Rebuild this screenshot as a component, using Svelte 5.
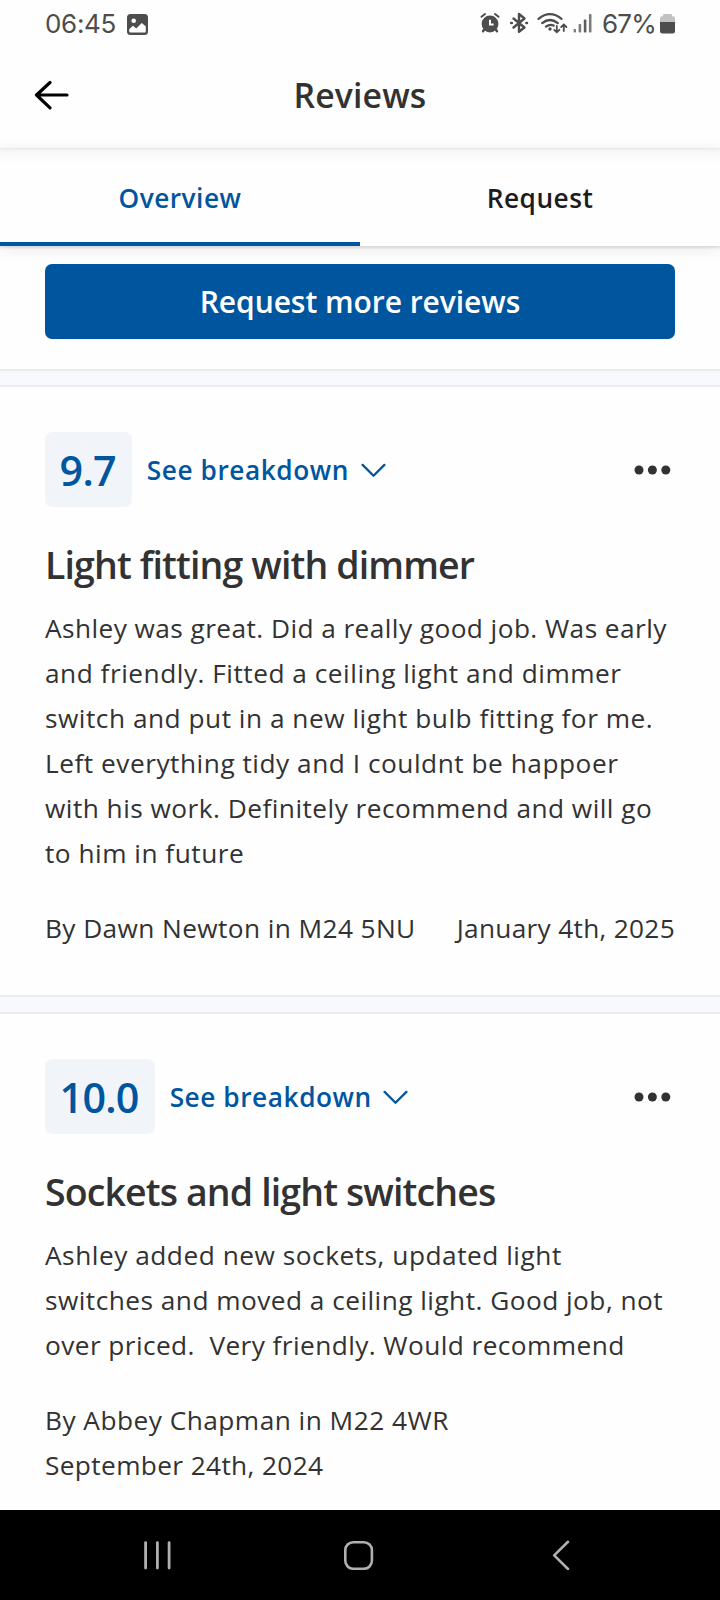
<script>
  const reviews = [
    {
      score: '9.7',
      title: 'Light fitting with dimmer',
      lines: [
        ['Ashley was great. Did a really good job. Was early', 0.43],
        ['and friendly. Fitted a ceiling light and dimmer', 0.51],
        ['switch and put in a new light bulb fitting for me.', 0.51],
        ['Left everything tidy and I couldnt be happoer', 0.52],
        ['with his work. Definitely recommend and will go', 0.47],
        ['to him in future', 0.5]
      ],
      by: ['By Dawn Newton in M24 5NU', 0.4],
      date: ['January 4th, 2025', 0.3]
    },
    {
      score: '10.0',
      title: 'Sockets and light switches',
      lines: [
        ['Ashley added new sockets, updated light', 0.52],
        ['switches and moved a ceiling light. Good job, not', 0.465],
        ['over priced.\u00a0 Very friendly. Would recommend', 0.42]
      ],
      by: ['By Abbey Chapman in M22 4WR', 0.48],
      date: ['September 24th, 2024', 0.37]
    }
  ];
</script>

<div class="screen">
  <div class="status">
    <span class="time">06:45</span>
    <svg class="photo" width="21" height="21" viewBox="0 0 21 21">
      <rect width="21" height="21" rx="3.5" fill="#4d4d4d" />
      <circle cx="6.7" cy="6.7" r="2.3" fill="#fff" />
      <path d="M2.2 15.2 6 11.8 9.2 14.4 14.8 9 18.8 12.6V17.5a1 1 0 0 1-1 1H3.2a1 1 0 0 1-1-1z" fill="#fff" />
    </svg>
    <span class="grow"></span>
    <svg class="icons" width="114" height="26" viewBox="0 0 114 26">
      <g fill="none" stroke="#4d4d4d" stroke-linecap="round">
        <circle cx="10" cy="13" r="8.4" fill="#4d4d4d" stroke="none" />
        <path d="M1.5 5.8 5 3M18.5 5.8 15 3" stroke-width="2" />
        <path d="M4.2 18.5 3 20.2M15.8 18.5 17 20.2" stroke-width="2.4" />
        <path d="M10 8.8V13.4H13.6" stroke="#fff" stroke-width="2" stroke-linecap="butt" />
        <path d="M33.5 7.5 44.5 16.5 39 20.8V3L44.5 7.5 33.5 16.5" stroke-width="2.4" stroke-linejoin="round" />
        <path d="M31.2 12H31.8M46.4 12H47" stroke-width="2.6" />
        <path d="M58.5 7.8Q70 -1.5 81.5 7.8M62.2 12.1Q70 5.8 77.8 12.1M66 15.6Q70 12.6 73.6 14.6" stroke-width="2.3" />
        <circle cx="70" cy="18" r="1.7" fill="#4d4d4d" stroke="none" />
        <path d="M76.8 15V21M74.2 18.8 76.8 21.3 79.4 18.8M83.8 20V14M81.2 16 83.8 13.4 86.4 16" stroke-width="1.8" />
      </g>
      <g fill="#7c7c7c">
        <rect x="93.6" y="18" width="2.4" height="3.6" rx=".8" />
        <rect x="98.6" y="13" width="2.6" height="8.6" rx=".8" />
        <rect x="103.8" y="8.5" width="2.6" height="13.1" rx=".8" fill="#5d5d5d" />
        <rect x="108.9" y="3" width="2.6" height="18.6" rx=".8" />
      </g>
    </svg>
    <span class="pct">67%</span>
    <svg class="battery" width="15" height="20" viewBox="0 0 15 20">
      <path d="M0 8V4.2Q0 2.2 2 2.2H3V1Q3 0 4 0H11Q12 0 12 1V2.2H13Q15 2.2 15 4.2V8z" fill="#c2c2c2" />
      <path d="M0 8H15V17Q15 19.5 12.5 19.5H2.5Q0 19.5 0 17z" fill="#4d4d4d" />
    </svg>
  </div>

  <header>
    <svg class="back" width="36" height="30" viewBox="0 0 36 30">
      <path d="M33 15H2.5M16 2.5 2.5 15 16 27.8" fill="none" stroke="#000" stroke-width="3.2" stroke-linecap="round" stroke-linejoin="round" />
    </svg>
    <h1>Reviews</h1>
  </header>

  <nav class="tabs">
    <div class="tab active"><span>Overview</span></div>
    <div class="tab"><span>Request</span></div>
  </nav>

  <div class="cta"><button>Request more reviews</button></div>

  {#each reviews as r, i}
    <div class="divider" class:tall={i > 0}></div>
    <article class:last={i === reviews.length - 1}>
      <div class="top">
        <span class="score">{r.score}</span>
        <span class="see">See breakdown</span>
        <svg class="chev" width="25" height="15" viewBox="0 0 25 15">
          <path d="M1.6 1.9 12.5 12.7 23.4 1.9" fill="none" stroke="#00569e" stroke-width="2.3" stroke-linecap="round" stroke-linejoin="round" />
        </svg>
        <span class="grow"></span>
        <svg class="dots" width="37" height="10" viewBox="0 0 37 10" fill="#323232">
          <circle cx="5" cy="5" r="4.5" /><circle cx="18.4" cy="5" r="4.5" /><circle cx="31.8" cy="5" r="4.5" />
        </svg>
      </div>
      <h2>{r.title}</h2>
      <p>{#each r.lines as [text, tracking]}<span class="line" style:letter-spacing="{tracking}px">{text}</span>{/each}</p>
      <div class="meta">
        <span style:letter-spacing="{r.by[1]}px">{r.by[0]}</span>
        <span style:letter-spacing="{r.date[1]}px">{r.date[0]}</span>
      </div>
    </article>
  {/each}

  <footer>
    <svg width="28" height="30" viewBox="0 0 28 30">
      <path d="M2.6 2.6V28M14.4 2.6V28M26.1 2.6V28" stroke="#b0b0b0" stroke-width="2.8" stroke-linecap="round" />
    </svg>
    <svg width="31" height="30" viewBox="0 0 31 30">
      <rect x="2.3" y="2.2" width="26.6" height="26.6" rx="8" fill="none" stroke="#b0b0b0" stroke-width="2.6" />
    </svg>
    <svg class="nav-back" width="18" height="30" viewBox="0 0 18 30">
      <path d="M16 1.8 2.2 15.4 16 29" fill="none" stroke="#b0b0b0" stroke-width="2.6" stroke-linecap="round" stroke-linejoin="round" />
    </svg>
  </footer>
</div>

<style>
  :global(body) { margin: 0; background: #fff; }
  .screen {
    width: 720px; height: 1600px; box-sizing: border-box; overflow: hidden;
    display: flex; flex-direction: column; background: #fefefe;
    font-family: 'Open Sans', 'Noto Sans', sans-serif; color: #323232;
  }
  .screen > * { flex: none; }
  svg { display: block; flex: none; }
  .grow { flex: 1; }
  .status {
    height: 48px; box-sizing: border-box; padding: 0 45px 0 45px;
    display: flex; align-items: center; color: #4d4d4d;
    font: 400 26px/46px Inter, sans-serif; white-space: nowrap;
  }
  .time { width: 82px; letter-spacing: -0.3px; }
  .icons { margin-right: 8px; }
  .pct { width: 58px; letter-spacing: -0.8px; }
  header {
    height: 100px; display: flex; align-items: center; justify-content: center;
    position: relative;
  }
  .back { position: absolute; left: 34px; top: 32px; }
  h1 { margin: 0; padding-bottom: 6px; font-size: 33.75px; line-height: 46px; font-weight: 600; letter-spacing: 0.15px; }
  .tabs {
    height: 98px; display: flex; position: relative;
    background: linear-gradient(#e2e2e2 0, #efefef 1px, #f6f6f6 3px, #fbfbfb 8px, #fefefe 16px);
    box-shadow: 0 2px 2px rgba(0,0,0,.1), 0 3px 14px rgba(0,0,0,.09);
  }
  .tab {
    flex: 1; box-sizing: border-box; display: flex; align-items: center; justify-content: center;
    padding-top: 6px; font-size: 26.25px; font-weight: 600; letter-spacing: 0.48px; color: #1c1c1c;
    border-bottom: 4px solid transparent;
  }
  .active { color: #00569e; border-bottom-color: #00569e; }
  .cta { padding: 18px 45px 30px; }
  button {
    display: block; width: 100%; height: 75px; border: 0; border-radius: 7px; padding: 0;
    background: #00569e; color: #fff; font: 600 30px/76px 'Open Sans', sans-serif; letter-spacing: -0.05px;
  }
  .divider {
    height: 18px; box-sizing: border-box; background: #f8f9fe;
    border-top: 2px solid #ececee; border-bottom: 2px solid #ececee;
  }
  .tall { height: 19px; }
  article { padding: 45px 45px 43.5px; }
  .last { padding-bottom: 0; }
  .top { height: 75px; display: flex; align-items: center; }
  .score {
    height: 75px; padding: 0 16.2px 0 14.6px; border-radius: 7px; background: #f1f5fa; color: #00569e;
    font-size: 41.25px; line-height: 76px; font-weight: 600; letter-spacing: -0.8px;
  }
  .see { margin-left: 15px; padding-top: 2px; color: #00569e; font-size: 26.25px; font-weight: 600; line-height: 45px; letter-spacing: 0.55px; }
  .chev { margin: 2px 0 0 11.5px; }
  .dots { margin: 1px 3.6px 0 0; }
  h2 { margin: 30px 0 13px; font-size: 37.5px; line-height: 56px; font-weight: 600; letter-spacing: -0.88px; white-space: nowrap; }
  p { margin: 0 0 30px; }
  .line { display: block; white-space: nowrap; }
  .line, .meta { font-size: 26.25px; line-height: 45px; }
  .meta { display: flex; flex-wrap: wrap; justify-content: space-between; column-gap: 30px; white-space: nowrap; }
  footer {
    height: 90px; margin-top: auto; background: #000;
    display: flex; align-items: center; gap: 172px; padding-left: 143px;
  }
  .nav-back { margin-left: 6px; }
</style>
